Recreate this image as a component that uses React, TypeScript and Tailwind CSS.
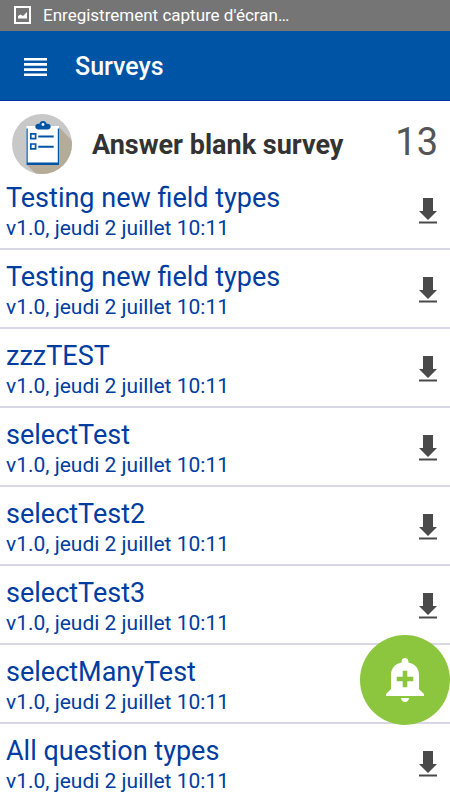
import React from 'react';

interface Survey {
  id: number;
  title: string;
  details: string;
}

const surveys: Survey[] = [
  { id: 1, title: 'Testing new field types', details: 'v1.0, jeudi 2 juillet 10:11' },
  { id: 2, title: 'Testing new field types', details: 'v1.0, jeudi 2 juillet 10:11' },
  { id: 3, title: 'zzzTEST', details: 'v1.0, jeudi 2 juillet 10:11' },
  { id: 4, title: 'selectTest', details: 'v1.0, jeudi 2 juillet 10:11' },
  { id: 5, title: 'selectTest2', details: 'v1.0, jeudi 2 juillet 10:11' },
  { id: 6, title: 'selectTest3', details: 'v1.0, jeudi 2 juillet 10:11' },
  { id: 7, title: 'selectManyTest', details: 'v1.0, jeudi 2 juillet 10:11' },
  { id: 8, title: 'All question types', details: 'v1.0, jeudi 2 juillet 10:11' },
];

const PictureIcon: React.FC = () => (
  <svg width="17" height="18" viewBox="0 0 17 18" aria-hidden="true">
    <path d="M1 1h15v16H1z" fill="none" stroke="#fff" strokeWidth="2" />
    <path d="M4 12.500V10l2.500-1.500L9 10l4-4v6.500z" fill="#fff" />
  </svg>
);

const MenuIcon: React.FC = () => (
  <svg width="23" height="18" viewBox="0 0 23 18" fill="#fff" aria-hidden="true">
    <path d="M0 0h23v2.600H0zM0 5.100h23v2.600H0zM0 10.300h23v2.600H0zM0 15.400h23V18H0z" />
  </svg>
);

const ClipboardIcon: React.FC = () => (
  <svg className="shrink-0" width="60" height="60" viewBox="0 0 60 60" aria-hidden="true">
    <defs>
      <clipPath id="disc">
        <circle cx="30" cy="30" r="30" />
      </clipPath>
    </defs>
    <g clipPath="url(#disc)">
      <path d="M0 0h60v60H0z" fill="#c8c8c8" />
      <path d="M47 13l20 21v34H32L15 51z" fill="#b5ab99" />
      <path d="M14.500 12H47v39H14.500z" fill="#fff" />
      <path d="M14.500 14.500h1.200v34h30.100v-34H47V51H14.500z" fill="#0054a6" />
      <path
        d="M26.500 15.500c-2.200 0-3.200-1.300-3.200-2.900s1.200-2.800 3.200-2.800h1C27.800 8 29 7 31 7s3.200 1 3.500 2.800h1c2 0 3.200 1.200 3.200 2.800s-1 2.900-3.200 2.900z"
        fill="#0054a6"
      />
      <circle cx="31" cy="10.500" r="1.400" fill="#fff" />
      <path d="M18.800 19.800h4.800v4.800h-4.800zM18.800 30h4.800v4.800h-4.800z" fill="#fff" stroke="#0054a6" strokeWidth="1.700" />
      <path d="M26.200 21.500h15.500v2H26.200zM26.200 31.700h15.500v2H26.200z" fill="#0054a6" />
    </g>
  </svg>
);

const DownloadIcon: React.FC = () => (
  <svg width="18" height="26" viewBox="0 0 18 26" fill="#4a4a4a" aria-hidden="true">
    <path d="M4 0h10v13h4l-9 9-9-9h4zM0 23.500h18v2H0z" />
  </svg>
);

const BellPlusIcon: React.FC = () => (
  <svg width="38" height="44" viewBox="0 0 38 44" aria-hidden="true">
    <path
      d="M19 0c2 0 3.400 1.400 3.400 3.400v1.200C29 6 33 10.500 33 17v14l5 5v2H0v-2l5-5V17C5 10.500 9 6 15.600 4.600V3.400C15.600 1.400 17 0 19 0zM15 40h8c0 2.300-1.700 4-4 4s-4-1.700-4-4z"
      fill="#fff"
    />
    <path d="M16.700 12.700h4.600v6h6v4.600h-6v6h-4.600v-6h-6v-4.600h6z" fill="#8cc63f" />
  </svg>
);

const SurveyRow: React.FC<{ survey: Survey }> = ({ survey }) => (
  <li className="flex items-center border-b-2 border-[#d8d7e5] pt-[10px] pb-2 pl-[6px] pr-[13px]">
    <div className="min-w-0 flex-1 text-[#003da1]">
      <h2 className="truncate text-[27px] leading-[35px]">{survey.title}</h2>
      <p className="truncate text-[21px] leading-6">{survey.details}</p>
    </div>
    <button type="button" aria-label={`Download ${survey.title}`} className="shrink-0">
      <DownloadIcon />
    </button>
  </li>
);

const App: React.FC = () => {
  return (
    <div className="relative flex h-screen flex-col overflow-hidden bg-white font-[Roboto,sans-serif]">
      <div className="flex h-[31px] shrink-0 items-center gap-3 bg-[#757575] px-[14px] pb-[2px] text-white">
        <PictureIcon />
        <span className="truncate text-[17px] leading-5">Enregistrement capture d'écran…</span>
      </div>

      <header className="flex h-[70px] shrink-0 items-center gap-7 border-b border-[#0033a0] bg-[#0054a6] px-6 pt-[2px] text-white">
        <button type="button" aria-label="Menu">
          <MenuIcon />
        </button>
        <h1 className="text-[25px] leading-8 font-medium">Surveys</h1>
      </header>

      <section className="flex h-[70px] shrink-0 items-center gap-5 px-3 pt-4">
        <ClipboardIcon />
        <h2 className="flex-1 truncate pt-[2px] text-[27px] leading-8 font-bold text-[#333]">
          Answer blank survey
        </h2>
        <span className="pb-1 text-[38px] leading-10 text-[#555]">13</span>
      </section>

      <main className="min-h-0 flex-1 overflow-hidden">
        <ul>
          {surveys.map((survey) => (
            <SurveyRow key={survey.id} survey={survey} />
          ))}
        </ul>
      </main>

      <button
        type="button"
        aria-label="Add reminder"
        className="absolute right-0 bottom-[75px] flex size-[90px] items-center justify-center rounded-full bg-[#8cc63f]"
      >
        <BellPlusIcon />
      </button>
    </div>
  );
};

export default App;
